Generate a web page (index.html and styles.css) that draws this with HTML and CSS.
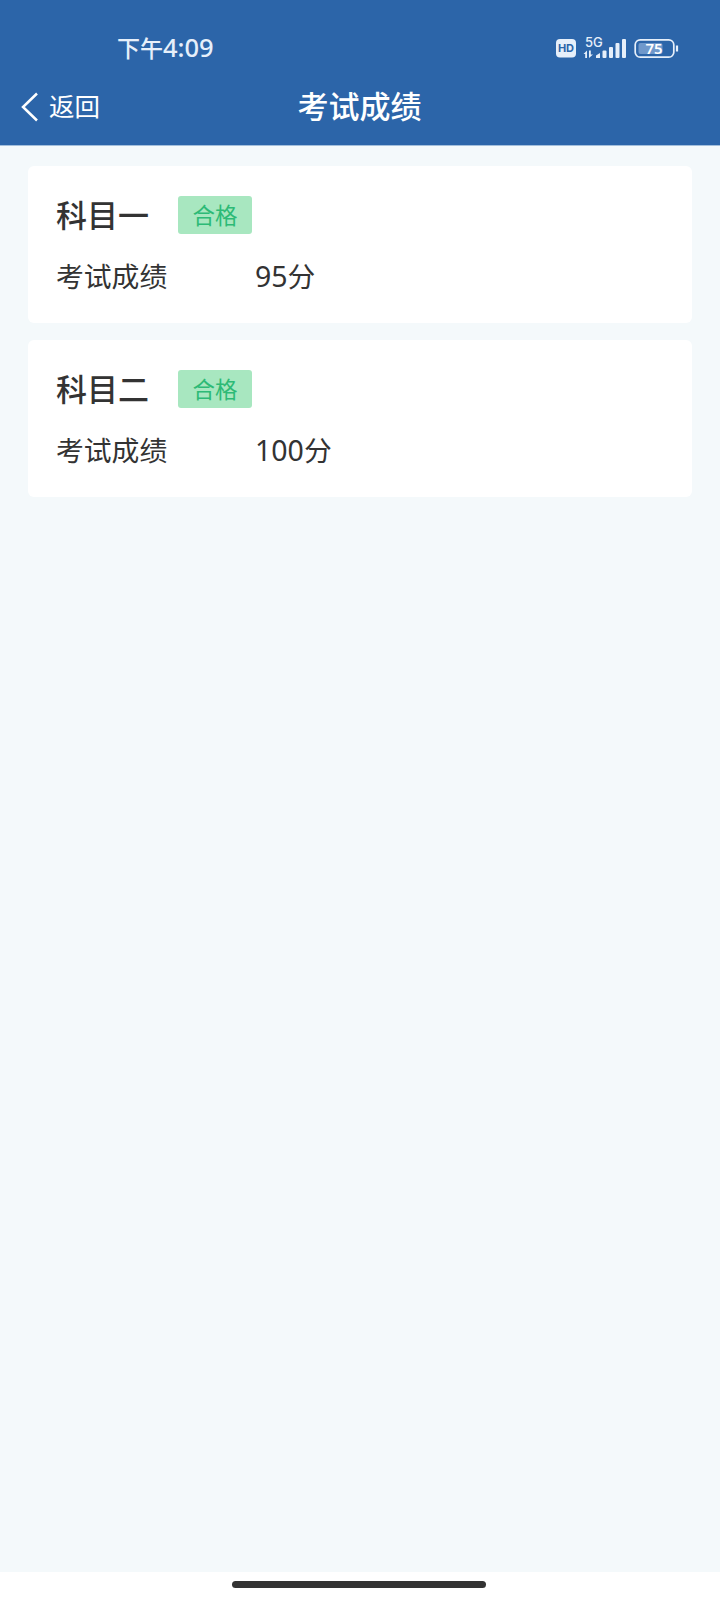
FILE: index.html
```
<!DOCTYPE html>
<html lang="zh-CN">
<head>
    <meta charset="UTF-8">
    <meta name="viewport" content="width=device-width, initial-scale=1.0">
    <title>考试成绩</title>
    <link rel="stylesheet" href="styles.css">
</head>
<body>
    <header class="header">
        <div class="status-bar">
            <span class="time">下午<span class="clock">4:09</span></span>
            <svg class="status-icons" width="124" height="26" viewBox="0 0 124 26">
                <!-- HD -->
                <rect x="0" y="4" width="20" height="18.500" rx="4" fill="#e6effa"/>
                <text x="10" y="17" class="hd" text-anchor="middle">HD</text>
                <!-- 5G signal -->
                <text x="29" y="12.400" class="net">5G</text>
                <g fill="#e6effa">
                    <path d="M27.500 19l3.500-3.500v7.500h-1.800v-4zM33 15.500h1.800v4h2.200l-4 3.500z"/>
                    <path d="M40 23v-2.500l4-2.500v5z"/>
                    <rect x="46.500" y="15.500" width="4" height="7.500" rx="1"/>
                    <rect x="53" y="12" width="4" height="11" rx="1"/>
                    <rect x="59.500" y="8" width="4" height="15" rx="1"/>
                    <rect x="66" y="4" width="4" height="19" rx="1"/>
                </g>
                <!-- battery -->
                <rect x="79.200" y="4.800" width="38.600" height="17.400" rx="5" fill="none" stroke="#e6effa" stroke-width="1.700"/>
                <rect x="82.500" y="8" width="24" height="11" rx="2" fill="#6f98cb"/>
                <path d="M121 10.500v6" stroke="#e6effa" stroke-width="2.200"/>
                <text x="98" y="18.800" class="level" text-anchor="middle">75</text>
            </svg>
        </div>
        <nav class="nav">
            <a class="back">
                <svg width="18" height="30" viewBox="0 0 18 30" fill="none" stroke="#fff" stroke-width="2.500">
                    <path d="M16 1.500L2 15l14 13.500"/>
                </svg>
                <span>返回</span>
            </a>
            <h1 class="title">考试成绩</h1>
        </nav>
    </header>

    <main class="list">
        <section class="card">
            <div class="card-head">
                <h2>科目一</h2>
                <span class="badge">合格</span>
            </div>
            <div class="row">
                <span class="label">考试成绩</span>
                <span class="score"><span class="num">95</span>分</span>
            </div>
        </section>
        <section class="card">
            <div class="card-head">
                <h2>科目二</h2>
                <span class="badge">合格</span>
            </div>
            <div class="row">
                <span class="label">考试成绩</span>
                <span class="score"><span class="num">100</span>分</span>
            </div>
        </section>
    </main>

    <footer class="home-bar">
        <div class="handle"></div>
    </footer>
</body>
</html>
```
FILE: styles.css
```
* {
    box-sizing: border-box;
    margin: 0;
    padding: 0;
}

body {
    display: flex;
    flex-direction: column;
    height: 1600px;
    background: #f4f9fb;
    color: #333;
    font-family: "Noto Sans CJK SC", sans-serif;
}

.header {
    height: 146px;
    border-bottom: 1px solid #a3bfdc;
    background: #2c65a9;
    color: #fff;
}

.status-bar {
    display: flex;
    justify-content: space-between;
    align-items: center;
    height: 68px;
    padding: 27px 40px 0 117px;
}

.time {
    color: #e6effa;
    font-size: 23px;
    font-weight: 500;
    line-height: 41px;
}

.clock {
    font-family: "Noto Sans", sans-serif;
    font-size: 25.500px;
}

.hd {
    fill: #2c65a9;
    font: bold 11px Inter, sans-serif;
}

.net {
    fill: #e6effa;
    font: 500 13px Inter, sans-serif;
}

.level {
    fill: #fff;
    font: 600 15px "Noto Sans", sans-serif;
}

.nav {
    display: grid;
    grid-template-columns: 1fr auto 1fr;
    align-items: center;
    height: 77px;
    padding: 0 21px;
}

.back {
    display: flex;
    align-items: center;
    gap: 10px;
    font-size: 25.500px;
}

.back span {
    padding-bottom: 4px;
}

.title {
    padding: 0 1px 4px 0;
    font-size: 31px;
    font-weight: 500;
}

.list {
    display: flex;
    flex: 1;
    flex-direction: column;
    gap: 17px;
    padding: 20px 28px 0;
}

.card {
    height: 157px;
    padding: 30px 28px 0;
    border-radius: 6px;
    background: #fff;
}

.card-head {
    display: flex;
    align-items: center;
    gap: 29px;
    height: 38px;
}

.card-head h2 {
    padding-bottom: 3px;
    font-size: 31px;
    font-weight: 500;
    line-height: 35px;
}

.badge {
    width: 74px;
    height: 38px;
    border-radius: 3px;
    background: #a8e7c0;
    color: #2dba76;
    font-size: 22.500px;
    line-height: 37px;
    text-align: center;
}

.row {
    display: flex;
    align-items: center;
    height: 42px;
    margin-top: 20px;
    font-size: 27.800px;
    line-height: 42px;
}

.label {
    width: 199px;
}

.num {
    font-family: "Noto Sans", sans-serif;
    font-size: 28.500px;
}

.home-bar {
    display: flex;
    justify-content: center;
    height: 28px;
    padding: 9px 3px 0 0;
    background: #fff;
}

.handle {
    width: 254px;
    height: 7px;
    border-radius: 4px;
    background: #333;
}
```
